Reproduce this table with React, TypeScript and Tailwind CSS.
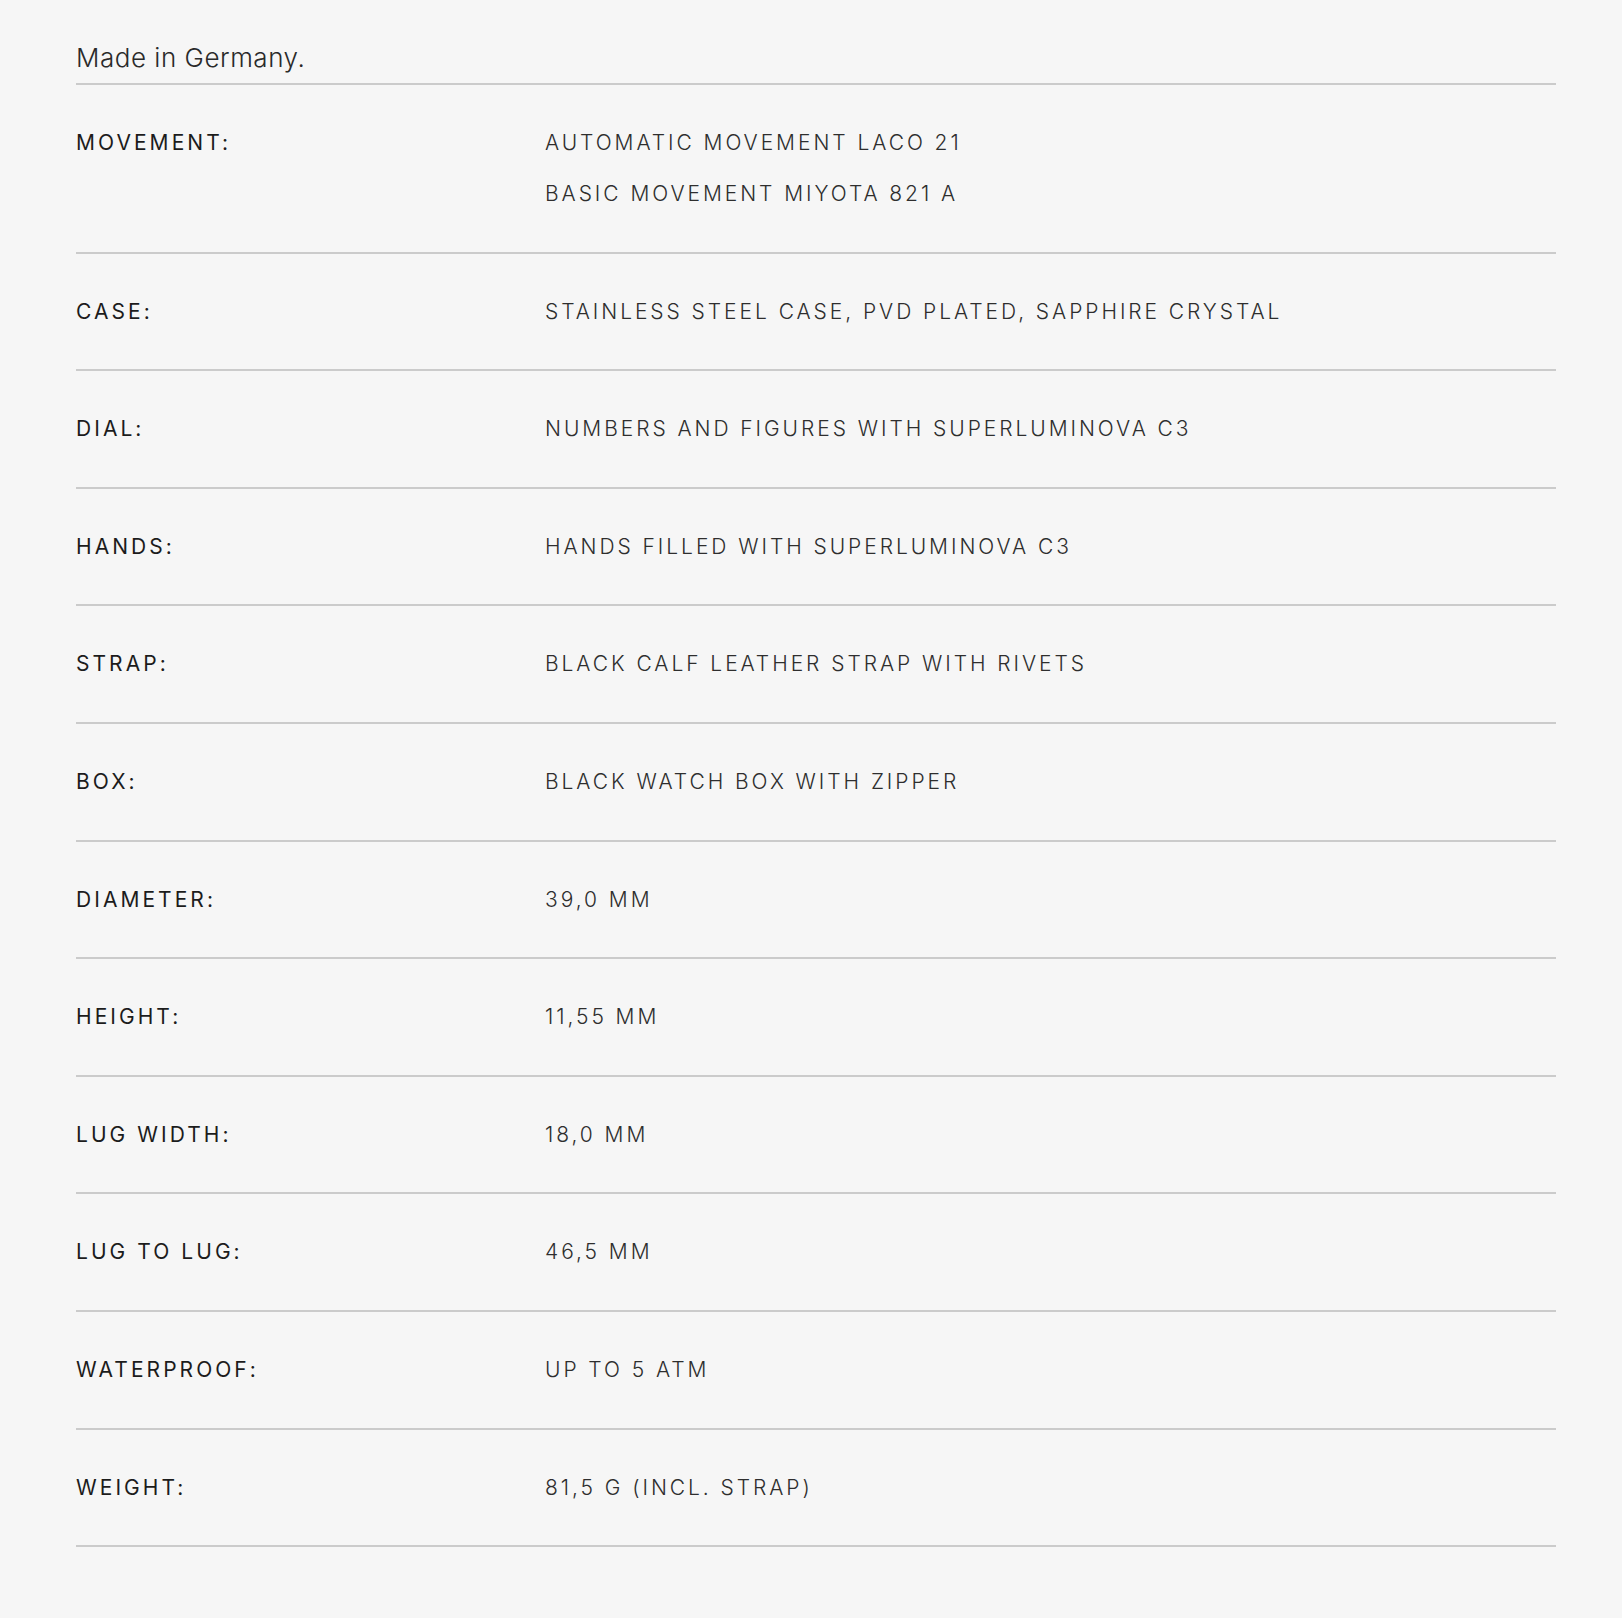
import React from "react";

const rows: { label: string; values: string[] }[] = [
  { label: "MOVEMENT:", values: ["AUTOMATIC MOVEMENT LACO 21", "BASIC MOVEMENT MIYOTA 821 A"] },
  { label: "CASE:", values: ["STAINLESS STEEL CASE, PVD PLATED, SAPPHIRE CRYSTAL"] },
  { label: "DIAL:", values: ["NUMBERS AND FIGURES WITH SUPERLUMINOVA C3"] },
  { label: "HANDS:", values: ["HANDS FILLED WITH SUPERLUMINOVA C3"] },
  { label: "STRAP:", values: ["BLACK CALF LEATHER STRAP WITH RIVETS"] },
  { label: "BOX:", values: ["BLACK WATCH BOX WITH ZIPPER"] },
  { label: "DIAMETER:", values: ["39,0 MM"] },
  { label: "HEIGHT:", values: ["11,55 MM"] },
  { label: "LUG WIDTH:", values: ["18,0 MM"] },
  { label: "LUG TO LUG:", values: ["46,5 MM"] },
  { label: "WATERPROOF:", values: ["UP TO 5 ATM"] },
  { label: "WEIGHT:", values: ["81,5 G (INCL. STRAP)"] },
];

export default function App() {
  return (
    <div className="min-h-[1618px] w-full bg-[#f6f6f6] font-['Inter','Liberation_Sans',sans-serif]">
      <div className="ml-[76px] w-[1480px] pt-[40px] pb-[71px]">
        <p className="border-b-2 border-[#cbcbcb] pb-[7px] text-[26px] font-light leading-[36px] tracking-[0.02em] text-[#2a2a2a]">
          Made in Germany.
        </p>
        {rows.map((r) => (
          <div key={r.label} className="flex border-b-2 border-[#cbcbcb] py-[33.05px]">
            <div className="w-[469px] shrink-0 text-[21px] font-normal leading-[49.5px] tracking-[0.145em] text-[#1c1c1c]">
              {r.label}
            </div>
            <div className="flex flex-col gap-[1.5px]">
              {r.values.map((v) => (
                <span key={v} className="text-[21px] font-light leading-[49.5px] tracking-[0.14em] text-[#2e2e2e]">
                  {v}
                </span>
              ))}
            </div>
          </div>
        ))}
      </div>
    </div>
  );
}
